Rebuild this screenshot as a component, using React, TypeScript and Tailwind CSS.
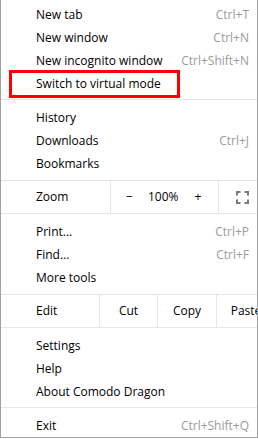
type MenuRowProps = {
  label: string;
  shortcut?: string;
};

const MenuRow = ({ label, shortcut }: MenuRowProps) => (
  <div className="flex h-[23px] items-center justify-between pl-[35px] pr-[8px]">
    <span className="text-black">{label}</span>
    {shortcut && <span className="text-[#9a9a9a]">{shortcut}</span>}
  </div>
);

const Separator = () => (
  <div className="pb-[6px] pt-[4px]">
    <div className="h-px bg-[#e6e6e6]" />
  </div>
);

const FullscreenIcon = () => (
  <svg aria-hidden="true" className="h-[13px] w-[13px]" fill="none" viewBox="0 0 13 13">
    <path
      d="M1 4.5V1h3.5M8.5 1H12v3.5M12 8.5V12H8.5M4.5 12H1V8.5"
      stroke="#7a7a7a"
      strokeWidth="2"
    />
  </svg>
);

const App = () => {
  return (
    <div
      className="relative h-[438px] w-[258px] overflow-hidden border-b border-l border-r border-[#a0a0a0] bg-white pt-[3px] text-[12px] leading-none"
      style={{ fontFamily: '"Open Sans", "Noto Sans", sans-serif' }}
    >
      <MenuRow label="New tab" shortcut="Ctrl+T" />
      <MenuRow label="New window" shortcut="Ctrl+N" />
      <MenuRow label="New incognito window" shortcut="Ctrl+Shift+N" />
      <MenuRow label="Switch to virtual mode" />
      <Separator />
      <MenuRow label="History" />
      <MenuRow label="Downloads" shortcut="Ctrl+J" />
      <MenuRow label="Bookmarks" />

      <div className="mt-[5px] flex h-[34px] border-b border-t border-[#e6e6e6]">
        <div className="flex w-[110px] shrink-0 items-center border-r border-[#e6e6e6] pl-[35px]">
          Zoom
        </div>
        <div className="flex w-[108px] shrink-0 items-center border-r border-[#e6e6e6]">
          <span className="w-[37px] text-center">−</span>
          <span className="w-[30px] text-center">100%</span>
          <span className="w-[40px] text-center">+</span>
        </div>
        <div className="flex items-center pl-[17px]">
          <FullscreenIcon />
        </div>
      </div>

      <div className="pt-[6px]">
        <MenuRow label="Print..." shortcut="Ctrl+P" />
        <MenuRow label="Find..." shortcut="Ctrl+F" />
        <MenuRow label="More tools" />
      </div>

      <div className="mt-[5px] flex h-[34px] border-b border-t border-[#e6e6e6]">
        <div className="flex w-[99px] shrink-0 items-center border-r border-[#e6e6e6] pl-[35px]">
          Edit
        </div>
        <div className="flex w-[58px] shrink-0 items-center justify-center border-r border-[#e6e6e6]">
          Cut
        </div>
        <div className="flex w-[59px] shrink-0 items-center justify-center border-r border-[#e6e6e6]">
          Copy
        </div>
        <div className="flex w-[58px] shrink-0 items-center justify-center">Paste</div>
      </div>

      <div className="pt-[6px]">
        <MenuRow label="Settings" />
        <MenuRow label="Help" />
        <MenuRow label="About Comodo Dragon" />
      </div>
      <Separator />
      <MenuRow label="Exit" shortcut="Ctrl+Shift+Q" />

      <div className="pointer-events-none absolute left-[8px] top-[70px] h-[28px] w-[171px] border-[3px] border-[#ff0000]" />
    </div>
  );
};

export default App;
